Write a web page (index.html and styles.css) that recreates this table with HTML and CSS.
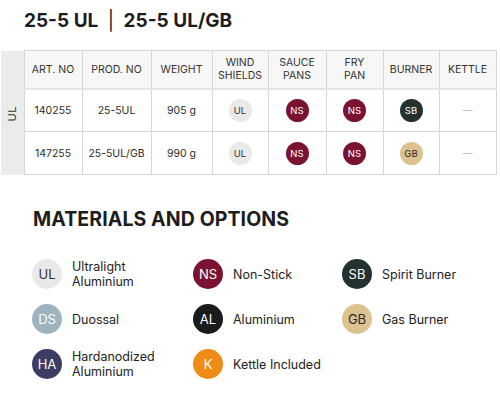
FILE: index.html
```html
<!DOCTYPE html>
<html>
<head>
<meta charset="utf-8">
<link rel="stylesheet" href="styles.css">
</head>
<body>
<h1 class="title">25-5 UL <span class="sep">|</span> 25-5 UL/GB</h1>
<table class="spec">
  <colgroup>
    <col class="w-side"><col class="w-art"><col class="w-prod"><col class="w-weight"><col class="w-wind"><col class="w-sauce"><col class="w-fry"><col class="w-burner"><col class="w-kettle">
  </colgroup>
  <tr class="head">
    <th rowspan="3" class="side"><span class="side-label">UL</span></th>
    <th>ART. NO</th><th>PROD. NO</th><th>WEIGHT</th><th>WIND<br>SHIELDS</th><th>SAUCE<br>PANS</th><th>FRY<br>PAN</th><th>BURNER</th><th>KETTLE</th>
  </tr>
  <tr class="row1">
    <td>140255</td><td>25-5UL</td><td>905 g</td>
    <td><span class="dot sm ul">UL</span></td>
    <td><span class="dot sm ns">NS</span></td>
    <td><span class="dot sm ns">NS</span></td>
    <td><span class="dot sm sb">SB</span></td>
    <td><span class="dash">—</span></td>
  </tr>
  <tr class="row2">
    <td>147255</td><td>25-5UL/GB</td><td>990 g</td>
    <td><span class="dot sm ul">UL</span></td>
    <td><span class="dot sm ns">NS</span></td>
    <td><span class="dot sm ns">NS</span></td>
    <td><span class="dot sm gb">GB</span></td>
    <td><span class="dash">—</span></td>
  </tr>
</table>
<h2 class="subtitle">MATERIALS AND OPTIONS</h2>
<div class="legend">
  <div class="item"><span class="dot lg ul">UL</span><span class="label">Ultralight<br>Aluminium</span></div>
  <div class="item"><span class="dot lg ns">NS</span><span class="label">Non-Stick</span></div>
  <div class="item"><span class="dot lg sb">SB</span><span class="label">Spirit Burner</span></div>
  <div class="item"><span class="dot lg ds">DS</span><span class="label">Duossal</span></div>
  <div class="item"><span class="dot lg al">AL</span><span class="label">Aluminium</span></div>
  <div class="item"><span class="dot lg gb">GB</span><span class="label">Gas Burner</span></div>
  <div class="item"><span class="dot lg ha">HA</span><span class="label">Hardanodized<br>Aluminium</span></div>
  <div class="item"><span class="dot lg k">K</span><span class="label">Kettle Included</span></div>
</div>
</body>
</html>
```
FILE: styles.css
```css
* { box-sizing: border-box; }
html, body { margin: 0; padding: 0; background: #fff; }
body {
  font-family: "Inter", "Lato", sans-serif;
  color: #1d1d1d;
  width: 500px;
  height: 400px;
  overflow: hidden;
}
.title {
  margin: 0;
  padding: 9px 0 0 24px;
  height: 33px;
  font-size: 19px;
  line-height: 24px;
  font-weight: 700;
  letter-spacing: 0;
}
.title .sep { font-weight: 400; margin: 0 5px; color: #1d1d1d; }
.spec {
  margin: 17px 0 0 1px;
  border-collapse: collapse;
  table-layout: fixed;
  width: 495px;
  font-size: 10.5px;
  color: #2b2b2b;
}
.w-side { width: 23px; }
.w-art { width: 58px; }
.w-prod { width: 69px; }
.w-weight { width: 61px; }
.w-wind { width: 56px; }
.w-sauce { width: 58px; }
.w-fry { width: 57px; }
.w-burner { width: 56px; }
.w-kettle { width: 57px; }
.spec th, .spec td {
  border: 1px solid #d6d6d6;
  text-align: center;
  vertical-align: middle;
  padding: 0;
}
.spec th {
  font-weight: 400;
  background: #f7f7f7;
  height: 38px;
  line-height: 13px;
  border-bottom: 2px solid #e4e4e4;
  color: #333;
}
.spec td { height: 43px; background: #fff; }
.spec .side {
  background: #ebebeb;
  border: none;
  border-right: 1px solid #d6d6d6;
  padding-top: 6px;
}
.side-label {
  display: inline-block;
  writing-mode: vertical-rl;
  transform: rotate(180deg);
  font-size: 11px;
  color: #333;
  letter-spacing: 0.5px;
}
.dot {
  display: inline-flex;
  align-items: center;
  justify-content: center;
  border-radius: 50%;
  color: #fff;
  vertical-align: middle;
}
.dot.sm { width: 23px; height: 23px; font-size: 9.5px; }
.dot.lg { width: 30px; height: 30px; font-size: 13px; }
.ul { background: #e9e9e9; color: #333; }
.ns { background: #7c1232; }
.sb { background: #233230; }
.gb { background: #dcc28f; color: #2a2a2a; }
.ds { background: #9db3be; }
.al { background: #1b1b1b; }
.ha { background: #3d3c63; }
.k { background: #ee8c16; }
.dash { color: #b5b5b5; font-size: 10px; }
.subtitle {
  margin: 32px 0 0 33px;
  font-size: 19.5px;
  line-height: 24px;
  font-weight: 700;
  letter-spacing: 0.1px;
}
.legend {
  display: grid;
  grid-template-columns: 161px 149px 1fr;
  row-gap: 15px;
  margin: 28px 0 0 32px;
}
.item {
  display: flex;
  align-items: center;
  gap: 10px;
  height: 30px;
}
.label {
  font-size: 12.5px;
  line-height: 15px;
  color: #222;
}
```
